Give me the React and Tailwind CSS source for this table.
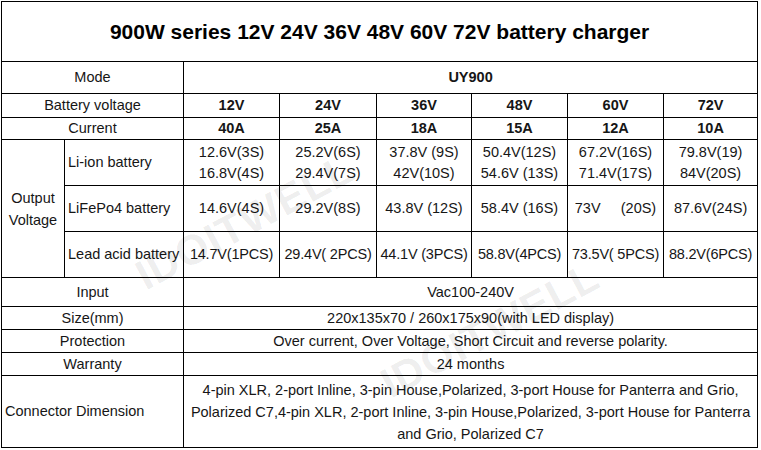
const cols = [63, 119, 96, 97, 95, 96, 96, 94];

const volts = ['12V', '24V', '36V', '48V', '60V', '72V'];
const amps = ['40A', '25A', '18A', '15A', '12A', '10A'];

const liIon = [
    ['12.6V(3S)', '16.8V(4S)'],
    ['25.2V(6S)', '29.4V(7S)'],
    ['37.8V (9S)', '42V(10S)'],
    ['50.4V(12S)', '54.6V (13S)'],
    ['67.2V(16S)', '71.4V(17S)'],
    ['79.8V(19)', '84V(20S)'],
];
const lifepo = ['14.6V(4S)', '29.2V(8S)', '43.8V (12S)', '58.4V (16S)', '73V     (20S)', '87.6V(24S)'];
const lead = ['14.7V(1PCS)', '29.4V( 2PCS)', '44.1V (3PCS)', '58.8V(4PCS)', '73.5V( 5PCS)', '88.2V(6PCS)'];

const td = 'border border-black p-0 text-center align-middle';

function Watermark({ className }) {
    return (
        <div className={`absolute w-[300px] text-center -rotate-[28deg] pointer-events-none ${className}`}>
            <span className="text-[42px] leading-none font-black tracking-[1px] text-[rgba(0,0,0,0.08)] font-['Liberation_Sans',Arial,sans-serif]">
                IDOITWELL
            </span>
        </div>
    );
}

export default function App() {
    return (
        <div className="relative w-[761px] h-[450px] bg-white overflow-hidden text-[14.5px] text-[#161616] font-['Liberation_Sans',Arial,sans-serif] leading-[21px]">
            <div className="pt-px pl-px">
                <table className="table-fixed border-collapse w-[757px]">
                    <colgroup>
                        {cols.map((w, i) => (
                            <col key={i} style={{ width: w }} />
                        ))}
                    </colgroup>
                    <tbody>
                        <tr className="h-[60px]">
                            <td colSpan={8} className={`${td} text-[21px] font-bold text-black`}>
                                900W series 12V 24V 36V 48V 60V 72V battery charger
                            </td>
                        </tr>
                        <tr className="h-[32px]">
                            <td colSpan={2} className={td}>Mode</td>
                            <td colSpan={6} className={`${td} font-bold`}>UY900</td>
                        </tr>
                        <tr className="h-[24px]">
                            <td colSpan={2} className={td}>Battery voltage</td>
                            {volts.map((v) => (
                                <td key={v} className={`${td} font-bold`}>{v}</td>
                            ))}
                        </tr>
                        <tr className="h-[22px]">
                            <td colSpan={2} className={td}>Current</td>
                            {amps.map((a) => (
                                <td key={a} className={`${td} font-bold`}>{a}</td>
                            ))}
                        </tr>
                        <tr className="h-[46px]">
                            <td rowSpan={3} className={`${td} leading-[22px]`}>
                                Output
                                <br />
                                Voltage
                            </td>
                            <td className={`${td} text-left pl-[3px]`}>Li-ion battery</td>
                            {liIon.map(([a, b]) => (
                                <td key={a} className={td}>
                                    <div>{a}</div>
                                    <div>{b}</div>
                                </td>
                            ))}
                        </tr>
                        <tr className="h-[46px]">
                            <td className={`${td} text-left pl-[3px]`}>LiFePo4 battery</td>
                            {lifepo.map((v) => (
                                <td key={v} className={`${td} whitespace-pre`}>{v}</td>
                            ))}
                        </tr>
                        <tr className="h-[46px]">
                            <td className={`${td} text-left pl-[3px] whitespace-nowrap`}>Lead acid battery</td>
                            {lead.map((v) => (
                                <td key={v} className={`${td} whitespace-pre tracking-[-0.2px]`}>{v}</td>
                            ))}
                        </tr>
                        <tr className="h-[29px]">
                            <td colSpan={2} className={td}>Input</td>
                            <td colSpan={6} className={td}>Vac100-240V</td>
                        </tr>
                        <tr className="h-[23px]">
                            <td colSpan={2} className={td}>Size(mm)</td>
                            <td colSpan={6} className={td}>220x135x70 / 260x175x90(with LED display)</td>
                        </tr>
                        <tr className="h-[23px]">
                            <td colSpan={2} className={td}>Protection</td>
                            <td colSpan={6} className={td}>
                                Over current, Over Voltage, Short Circuit and reverse polarity.
                            </td>
                        </tr>
                        <tr className="h-[23px]">
                            <td colSpan={2} className={td}>Warranty</td>
                            <td colSpan={6} className={td}>24 months</td>
                        </tr>
                        <tr className="h-[72px]">
                            <td colSpan={2} className={`${td} text-left pl-[3px]`}>Connector Dimension</td>
                            <td colSpan={6} className={`${td} leading-[22px] whitespace-nowrap`}>
                                4-pin XLR, 2-port Inline, 3-pin House,Polarized, 3-port House for Panterra and Grio,
                                <br />
                                Polarized C7,4-pin XLR, 2-port Inline, 3-pin House,Polarized, 3-port House for Panterra
                                <br />
                                and Grio, Polarized C7
                            </td>
                        </tr>
                    </tbody>
                </table>
            </div>

            <Watermark className="left-[95px] top-[201px]" />
            <Watermark className="left-[340px] top-[309px]" />
        </div>
    );
}
